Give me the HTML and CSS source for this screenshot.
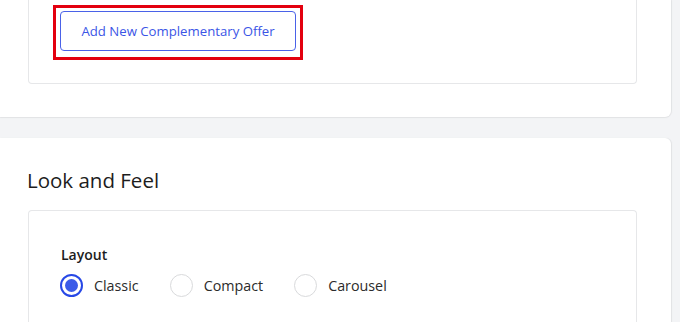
FILE: index.html
```html
<!DOCTYPE html>
<html>
<head>
<meta charset="utf-8">
<link rel="stylesheet" href="styles.css">
</head>
<body>
<div class="page">
  <section class="panel panel-top">
    <div class="card card-top">
      <div class="highlight">
        <button class="btn-outline">Add New Complementary Offer</button>
      </div>
    </div>
  </section>
  <section class="panel panel-bottom">
    <h2 class="title">Look and Feel</h2>
    <div class="card card-bottom">
      <div class="field-label">Layout</div>
      <div class="radios">
        <label class="radio"><span class="dot checked"></span><span class="radio-text">Classic</span></label>
        <label class="radio"><span class="dot"></span><span class="radio-text">Compact</span></label>
        <label class="radio"><span class="dot"></span><span class="radio-text">Carousel</span></label>
      </div>
    </div>
  </section>
</div>
</body>
</html>
```
FILE: styles.css
```css
html, body {
  margin: 0;
  padding: 0;
}
body {
  background: #f3f4f6;
  font-family: "Open Sans", "Noto Sans", "Liberation Sans", sans-serif;
  color: #1e1e1e;
  width: 680px;
  height: 322px;
  overflow: hidden;
}
.page {
  display: flex;
  flex-direction: column;
  gap: 21px;
  width: 671px;
}
.panel {
  background: #fff;
  box-sizing: border-box;
}
.panel-top {
  height: 117px;
  padding: 0 34px 0 28px;
  border-bottom-right-radius: 6px;
  box-shadow: 0 1px 1px #e2e3e5, 1px 0 1px #e2e3e5;
}
.card {
  border: 1px solid #e6e7e9;
  border-radius: 4px;
  box-sizing: border-box;
}
.card-top {
  height: 84px;
  border-top: none;
  border-top-left-radius: 0;
  border-top-right-radius: 0;
  padding: 5px 0 0 24px;
}
.highlight {
  display: inline-flex;
  border: 3px solid #e3000f;
  padding: 3px 4px 6px 4px;
}
.btn-outline {
  width: 236px;
  height: 40px;
  border: 1px solid #4a62e8;
  border-radius: 4px;
  background: #fff;
  color: #3b55e6;
  font-family: inherit;
  font-size: 13.2px;
  padding: 0;
}
.panel-bottom {
  border-top-right-radius: 6px;
  padding: 30px 34px 0 28px;
  height: 200px;
  box-shadow: 1px 0 1px #e2e3e5;
}
.title {
  margin: 0 0 18px -1px;
  font-size: 20.5px;
  font-weight: 400;
  line-height: 24px;
  color: #1d1d1d;
}
.card-bottom {
  height: 140px;
  padding: 34px 0 0 32px;
  border-bottom: none;
}
.field-label {
  font-size: 14px;
  font-weight: 600;
  line-height: 20px;
  color: #1d1d1d;
}
.radios {
  display: flex;
  margin-top: 9px;
}
.radio {
  display: flex;
  align-items: center;
  margin-right: 32px;
}
.dot {
  width: 23px;
  height: 23px;
  border-radius: 50%;
  border: 1px solid #d9dadc;
  box-sizing: border-box;
  margin-right: 11px;
  margin-left: -1px;
  position: relative;
}
.dot.checked {
  border: 2.5px solid #2748e6;
}
.dot.checked::after {
  content: "";
  position: absolute;
  left: 2.5px;
  top: 2.5px;
  width: 13px;
  height: 13px;
  border-radius: 50%;
  background: #3b5be8;
}
.radio-text {
  font-size: 14.3px;
  line-height: 22px;
  color: #2b2b2b;
}
```
